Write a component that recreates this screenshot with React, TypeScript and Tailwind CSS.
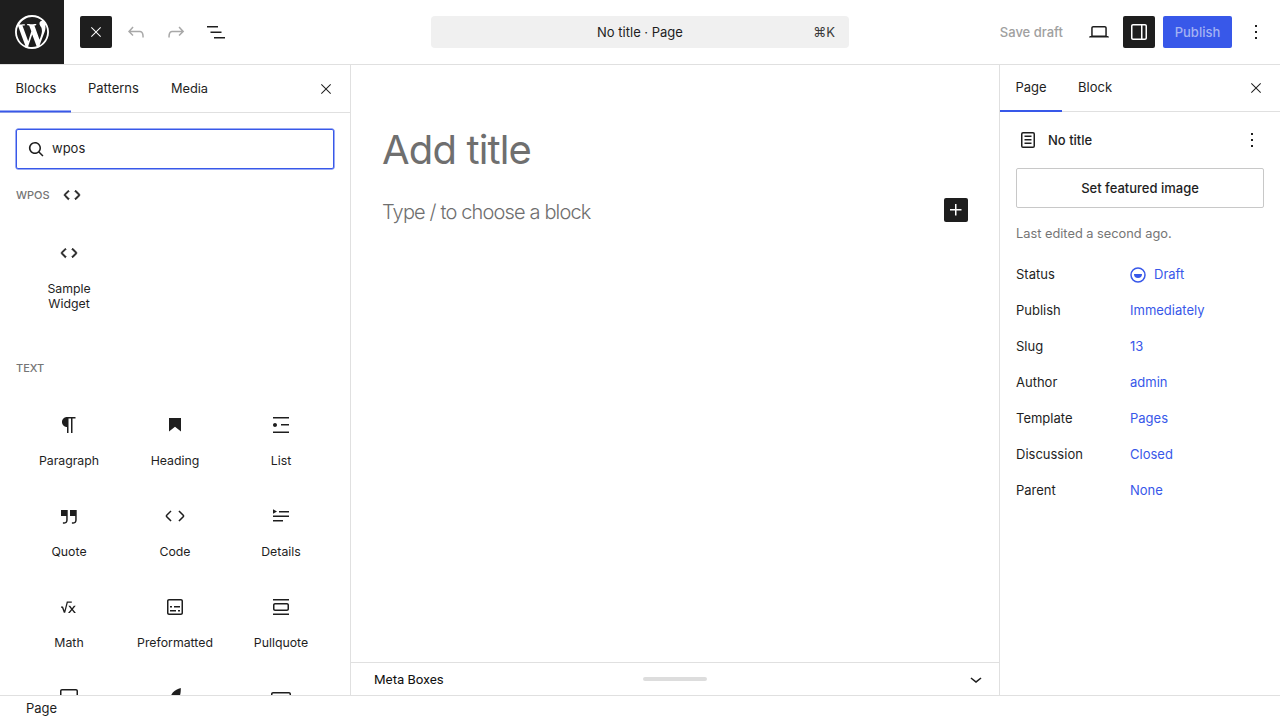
import React from "react";

const P = {
  close: "m13.06 12 6.47-6.47-1.06-1.06L12 10.94 5.53 4.47 4.47 5.53 10.94 12l-6.47 6.47 1.06 1.06L12 13.06l6.47 6.47 1.06-1.06L13.06 12Z",
  undo: "M18.3 11.7c-.6-.6-1.4-.9-2.3-.9H6.7l2.9-3.3-1.1-1-4.5 5L8.5 16l1-1-2.7-2.7H16c.5 0 .9.2 1.3.5 1 1 1 3.4 1 4.5v.3h1.5v-.2c0-1.5 0-4.3-1.5-5.7z",
  redo: "M15.6 6.5l-1.1 1 2.9 3.3H8c-.9 0-1.7.3-2.3.9-1.4 1.5-1.4 4.2-1.4 5.6v.2h1.5v-.3c0-1.1 0-3.5 1-4.5.3-.3.7-.5 1.3-.5h9.2L14.5 15l1.1 1.1 4.6-4.6-4.6-5z",
  listView: "M3 6h11v1.5H3V6Zm3.5 5.5h11V13h-11v-1.5ZM21 17H10v1.5h11V17Z",
  plus: "M11 12.5V17.5H12.5V12.5H17.5V11H12.5V6H11V11H6V12.5H11Z",
  desktop: "M20.5 16h-.7V8c0-1.1-.9-2-2-2H6.2c-1.1 0-2 .9-2 2v8h-.7c-.8 0-1.5.7-1.5 1.5h20c0-.8-.7-1.5-1.5-1.5zM5.7 8c0-.3.2-.5.5-.5h11.6c.3 0 .5.2.5.5v7.6H5.7V8z",
  drawer: "M18 4H6c-1.1 0-2 .9-2 2v12c0 1.1.9 2 2 2h12c1.1 0 2-.9 2-2V6c0-1.1-.9-2-2-2zm-4 14.5H6c-.3 0-.5-.2-.5-.5V6c0-.3.2-.5.5-.5h8v13zm4.5-.5c0 .3-.2.5-.5.5h-2.5v-13H18c.3 0 .5.2.5.5v12z",
  more: "M13 19h-2v-2h2v2zm0-6h-2v-2h2v2zm0-6h-2V5h2v2z",
  paragraph: "m9.99609 14v-.2251l.00391.0001v6.225h1.5v-14.5h2.5v14.5h1.5v-14.5h3v-1.5h-8.50391c-2.76142 0-5 2.23858-5 5 0 2.7614 2.23858 5 5 5z",
  heading: "M6 5V18.5911L12 13.8473L18 18.5911V5H6Z",
  list: "M4 4v1.5h16V4H4zm8 8.5h8V11h-8v1.5zM4 20h16v-1.5H4V20zm4-8c0-1.1-.9-2-2-2s-2 .9-2 2 .9 2 2 2 2-.9 2-2z",
  quote: "M13 6v6h5.2v4c0 .8-.2 1.4-.5 1.7-.6.6-1.6.6-2.5.5h-.3v1.5h.5c1 0 2.3-.1 3.3-1 .6-.6 1-1.6 1-2.8V6H13zm-9 6h5.2v4c0 .8-.2 1.4-.5 1.7-.6.6-1.6.6-2.5.5h-.3v1.5h.5c1 0 2.3-.1 3.3-1 .6-.6 1-1.6 1-2.8V6H4v6z",
  code: "M20.8 10.7l-4.3-4.3-1.1 1.1 4.3 4.3c.1.1.1.3 0 .4l-4.3 4.3 1.1 1.1 4.3-4.3c.7-.8.7-1.9 0-2.6zM4.2 11.8l4.3-4.3-1-1-4.3 4.3c-.7.7-.7 1.8 0 2.500l4.3 4.3 1.1-1.1-4.3-4.3c-.2-.1-.2-.3-.1-.4z",
  details: "M4 16h10v1.5H4V16Zm0-4.500h16V13H4v-1.500ZM10 7h10v1.500H10V7ZM4 5.250V9.750L8 7.500L4 5.250Z",
  math: "M4 11.500h2l1.500 4 2.300-9h5v1.300h-4l-2.600 10H6.800L5 12.800H4v-1.300Zm9.200-.700 1.800 2.400 1.900-2.400h1.800l-2.800 3.400 3 3.800h-1.800L15 15.200l-2.200 2.800H11l3.100-3.800-2.700-3.400h1.800Z",
  pre: "M18 4H6c-1.1 0-2 .9-2 2v12c0 1.1.9 2 2 2h12c1.1 0 2-.9 2-2V6c0-1.1-.9-2-2-2zm.5 14c0 .3-.2.5-.5.5H6c-.3 0-.5-.2-.5-.5V6c0-.3.2-.5.5-.5h12c.3 0 .5.2.5.5v12zM7 16.5h6V15H7v1.5zm4-4h6V11h-6v1.5zM9 11H7v1.5h2V11zm6 5.5h2V15h-2v1.5z",
  pull: "M18 8H6c-1.1 0-2 .9-2 2v4c0 1.1.9 2 2 2h12c1.1 0 2-.9 2-2v-4c0-1.1-.9-2-2-2zm.5 6c0 .3-.2.5-.5.5H6c-.3 0-.5-.2-.5-.5v-4c0-.3.2-.5.5-.5h12c.3 0 .5.2.5.5v4zM4 4v1.5h16V4H4zm0 16h16v-1.5H4V20z",
  table: "M5 3h14c1.100 0 2 .9 2 2v14c0 1.100-.9 2-2 2H5c-1.100 0-2-.9-2-2V5c0-1.100.9-2 2-2Zm0 1.500c-.3 0-.5.2-.5.5v14c0 .3.2.5.5.5h14c.3 0 .5-.2.5-.5V5c0-.3-.2-.5-.5-.5H5Z",
  verse: "M17.800 2c-3 1-6 2-8 4.500-1.500 1.800-2.500 4.500-3 7.500l-1 3 1.300.5 1-2.800c3-.2 6-1.200 8-3.700 1.500-2 1.700-5.500 1.700-9Z",
  box: "M4 6h16c1.100 0 2 .9 2 2v8c0 1.100-.9 2-2 2H4c-1.100 0-2-.9-2-2V8c0-1.100.9-2 2-2Zm0 1.500c-.3 0-.5.2-.5.5v8c0 .3.2.5.5.5h16c.3 0 .5-.2.5-.5V8c0-.3-.2-.5-.5-.5H4Z",
  page: "M15.5 7.5h-7V9h7V7.5Zm-7 3.5h7v1.5h-7V11Zm7 3.5h-7V16h7v-1.5ZM17 4H7a2 2 0 0 0-2 2v12a2 2 0 0 0 2 2h10a2 2 0 0 0 2-2V6a2 2 0 0 0-2-2Zm.5 14a.5.5 0 0 1-.5.5H7a.5.5 0 0 1-.5-.5V6a.5.5 0 0 1 .5-.5h10a.5.5 0 0 1 .5.5v12Z",
  chevron: "M17.5 11.6L12 16l-5.5-4.4.9-1.2L12 14l4.5-3.6 1 1.2z",
  search: "M13 5c-3.3 0-6 2.700-6 6 0 1.400.5 2.700 1.300 3.700l-3.800 3.800 1.100 1.100 3.800-3.800c1 .8 2.300 1.300 3.700 1.300 3.300 0 6-2.700 6-6S16.300 5 13 5zm0 10.500c-2.500 0-4.500-2-4.500-4.500s2-4.500 4.500-4.500 4.500 2 4.500 4.500-2 4.500-4.500 4.500z",
  wp: "M20 10c0-5.51-4.49-10-10-10C4.48 0 0 4.49 0 10c0 5.52 4.48 10 10 10 5.51 0 10-4.48 10-10zM7.78 15.37L4.37 6.22c.55-.02 1.17-.08 1.17-.08.5-.06.44-.67-.06-.64 0 0-1.45.11-2.37.11-.18 0-.37 0-.58-.01C4.120 3.010 6.870 1.110 10 1.110c2.330 0 4.450.87 6.050 2.340-.68-.11-1.650.39-1.650 1.580 0 .74.45 1.360.9 2.100.35.61.55 1.360.55 2.460 0 1.490-1.400 5-1.400 5l-3.030-8.370c.54-.02.82-.17.82-.17.5-.05.44-.79-.06-.76 0 0-1.440.12-2.380.12-.87 0-2.330-.12-2.330-.12-.5-.03-.56.73-.06.76l.92.08 1.260 3.410zM17.410 10c.24-.64.74-1.870.43-4.250.7 1.290 1.050 2.710 1.050 4.250 0 3.290-1.730 6.240-4.400 7.780.97-2.590 1.940-5.200 2.920-7.780zM6.100 18.090C3.120 16.650 1.110 13.530 1.110 10c0-1.300.23-2.480.72-3.590C3.250 10.300 4.670 14.200 6.100 18.090zm4.030-6.630l2.580 6.980c-.86.29-1.760.45-2.710.45-.79 0-1.570-.11-2.290-.33.81-2.380 1.620-4.740 2.420-7.100z",
};

function Icon({ d, className = "fill-[#1e1e1e]", size = 24 }: { d: string; className?: string; size?: number }) {
  return (
    <svg viewBox="0 0 24 24" width={size} height={size} className={className}>
      <path d={d} />
    </svg>
  );
}

function IconButton({ d, className = "", fill, size = 24 }: { d: string; className?: string; fill?: string; size?: number }) {
  return (
    <div className={`w-8 h-8 flex items-center justify-center rounded-[2px] ${className}`}>
      <Icon d={d} size={size} className={fill ?? "fill-[#1e1e1e]"} />
    </div>
  );
}

function Block({ d, label }: { d: string; label?: string }) {
  return (
    <div className="h-[91px] flex flex-col items-center pt-[20px]">
      <Icon d={d} />
      {label && <div className="mt-[16px] text-[12.3px] leading-[16px] text-[#1e1e1e] text-center">{label}</div>}
    </div>
  );
}

function Row({ label, value, icon }: { label: string; value: string; icon?: boolean }) {
  return (
    <div className="h-9 flex items-center">
      <div className="w-[114px] text-[13px] text-[#1e1e1e]">{label}</div>
      <div className="flex items-center gap-[8px] text-[13px] text-[#3858e9]">
        {icon && (
          <svg viewBox="0 0 16 16" width="16" height="16" className="-mt-px">
            <circle cx="8" cy="8" r="7" fill="none" stroke="#3858e9" strokeWidth="1.5" />
            <path d="M4 7h8a4 4 0 0 1-8 0Z" fill="#3858e9" />
          </svg>
        )}
        {value}
      </div>
    </div>
  );
}

export default function App() {
  return (
    <div className="w-[1280px] h-[720px] overflow-hidden flex flex-col bg-white font-['Inter','Liberation_Sans',sans-serif] text-[#1e1e1e]">
      <header className="h-[65px] shrink-0 border-b border-[#e0e0e0] grid grid-cols-[1fr_418px_1fr] items-center">
        <div className="flex items-center h-16">
          <div className="w-16 h-16 bg-[#1e1e1e] flex items-center justify-center">
            <svg viewBox="0 0 20 20" width="34" height="34" className="fill-white">
              <path d={P.wp} />
            </svg>
          </div>
          <div className="flex items-center gap-2 ml-4">
            <IconButton d={P.close} size={16} className="bg-[#1e1e1e]" fill="fill-white" />
            <IconButton d={P.undo} fill="fill-[#a8a8a8]" />
            <IconButton d={P.redo} fill="fill-[#a8a8a8]" />
            <IconButton d={P.listView} />
          </div>
        </div>
        <div className="h-8 bg-[#f0f0f0] rounded-[4px] relative flex items-center justify-center pt-[2px] text-[13px] text-[#1e1e1e]">
          No title · Page
          <span className="absolute right-[14px] text-[13px] text-[#3a3a3a]">⌘K</span>
        </div>
        <div className="flex items-center justify-end gap-2 pr-2">
          <div className="px-3 pt-[2px] text-[13px] font-medium text-[#a0a0a0]">Save draft</div>
          <IconButton d={P.desktop} />
          <IconButton d={P.drawer} className="bg-[#1e1e1e]" fill="fill-white" />
          <div className="w-[69px] h-8 pt-[2px] rounded-[2px] bg-[#3858e9] flex items-center justify-center text-[13px] font-medium text-[#a4b2f3]">
            Publish
          </div>
          <IconButton d={P.more} />
        </div>
      </header>

      <div className="flex-1 min-h-0 flex">
        <aside className="w-[351px] shrink-0 border-r border-[#e0e0e0] overflow-hidden">
          <div className="h-[48px] border-b border-[#e0e0e0] flex items-center">
            <div className="w-[71px] h-[47px] flex items-center justify-center pl-px text-[13px] border-b-2 border-[#3858e9] pt-[1px] translate-y-[0.5px]">Blocks</div>
            <div className="ml-[17px] text-[13px]">Patterns</div>
            <div className="ml-[32px] text-[12.8px]">Media</div>
            <div className="ml-auto mr-[16px] mt-[1px]">
              <Icon d={P.close} size={16} />
            </div>
          </div>
          <div className="px-4 pt-4">
            <div className="h-10 border border-[#3858e9] shadow-[0_0_0_0.5px_#3858e9] rounded-[2px] flex items-center pl-[7px] gap-[4px]">
              <Icon d={P.search} className="fill-[#1e1e1e] -scale-x-100" />
              <span className="text-[13px] text-[#1e1e1e]">wpos</span>
            </div>
            <div className="h-[26px] mt-[13px] flex items-center gap-[12px]">
              <span className="text-[11px] font-medium text-[#757575]">WPOS</span>
              <Icon d={P.code} size={20} className="fill-[#1e1e1e] stroke-[#1e1e1e] stroke-[1]" />
            </div>
            <div className="grid grid-cols-3 mt-[33px]">
              <div className="flex flex-col items-center">
                <Icon d={P.code} size={20} className="fill-[#1e1e1e] stroke-[#1e1e1e] stroke-[1] my-[2px]" />
                <div className="mt-[16px] text-[12.3px] leading-[15px] text-center w-[70px]">Sample Widget</div>
              </div>
            </div>
            <div className="mt-[49px] h-4 flex items-center text-[11px] font-medium text-[#757575]">TEXT</div>
            <div className="grid grid-cols-3 mt-[17px]">
              <Block d={P.paragraph} label="Paragraph" />
              <Block d={P.heading} label="Heading" />
              <Block d={P.list} label="List" />
              <Block d={P.quote} label="Quote" />
              <Block d={P.code} label="Code" />
              <Block d={P.details} label="Details" />
              <Block d={P.math} label="Math" />
              <Block d={P.pre} label="Preformatted" />
              <Block d={P.pull} label="Pullquote" />
              <Block d={P.table} />
              <Block d={P.verse} />
              <Block d={P.box} />
            </div>
          </div>
        </aside>

        <main className="flex-1 min-w-0 flex flex-col">
          <div className="flex-1 min-h-0 pl-[31px] pr-[31px] pt-[59px]">
            <div className="text-[40px] leading-[52px] text-[#6f6f6f] tracking-[-0.85px]">Add title</div>
            <div className="mt-[21px] flex items-center justify-between">
              <div className="text-[20px] leading-[30px] font-light text-[#6f6f6f] tracking-[-0.85px]">Type / to choose a block</div>
              <div className="w-6 h-6 bg-[#1e1e1e] rounded-[2px] flex items-center justify-center -mt-[4px] mr-px">
                <Icon d={P.plus} className="fill-white" />
              </div>
            </div>
          </div>
          <div className="h-[33px] shrink-0 border-t border-[#e0e0e0] grid grid-cols-[292px_64px_1fr] items-center">
            <div className="pl-[23px] pt-[2px] text-[13.3px] font-['Roboto',sans-serif] text-[#111]">Meta Boxes</div>
            <div className="h-1 rounded-[2px] bg-[#dddddd] -mt-[1px]" />
            <div className="flex justify-end pr-[12px]">
              <Icon d={P.chevron} size={24} className="fill-[#1e1e1e] -mt-[1px]" />
            </div>
          </div>
        </main>

        <aside className="w-[281px] shrink-0 border-l border-[#e0e0e0] -ml-px">
          <div className="h-[47px] border-b border-[#e0e0e0] flex items-center">
            <div className="w-[62px] h-[47px] flex items-center justify-center text-[13px] border-b-2 border-[#3858e9] pt-[1px]">Page</div>
            <div className="ml-4 text-[13px]">Block</div>
            <div className="ml-auto mr-[16px]">
              <Icon d={P.close} size={16} />
            </div>
          </div>
          <div className="px-4">
            <div className="h-[56px] flex items-center">
              <Icon d={P.page} />
              <span className="ml-[8px] pt-[2px] text-[13px] font-medium">No title</span>
              <div className="ml-auto">
                <Icon d={P.more} />
              </div>
            </div>
            <div className="h-10 pt-[2px] border border-[#c8c8c8] rounded-[2px] flex items-center justify-center text-[13px] font-medium">
              Set featured image
            </div>
            <div className="mt-[17px] text-[12.8px] leading-[18px] text-[#757575]">Last edited a second ago.</div>
            <div className="mt-[14px]">
              <Row label="Status" value="Draft" icon />
              <Row label="Publish" value="Immediately" />
              <Row label="Slug" value="13" />
              <Row label="Author" value="admin" />
              <Row label="Template" value="Pages" />
              <Row label="Discussion" value="Closed" />
              <Row label="Parent" value="None" />
            </div>
          </div>
        </aside>
      </div>

      <footer className="h-[25px] shrink-0 pt-[2px] border-t border-[#e0e0e0] bg-white flex items-center pl-[26px] text-[13px] text-[#1e1e1e]">Page</footer>
    </div>
  );
}
